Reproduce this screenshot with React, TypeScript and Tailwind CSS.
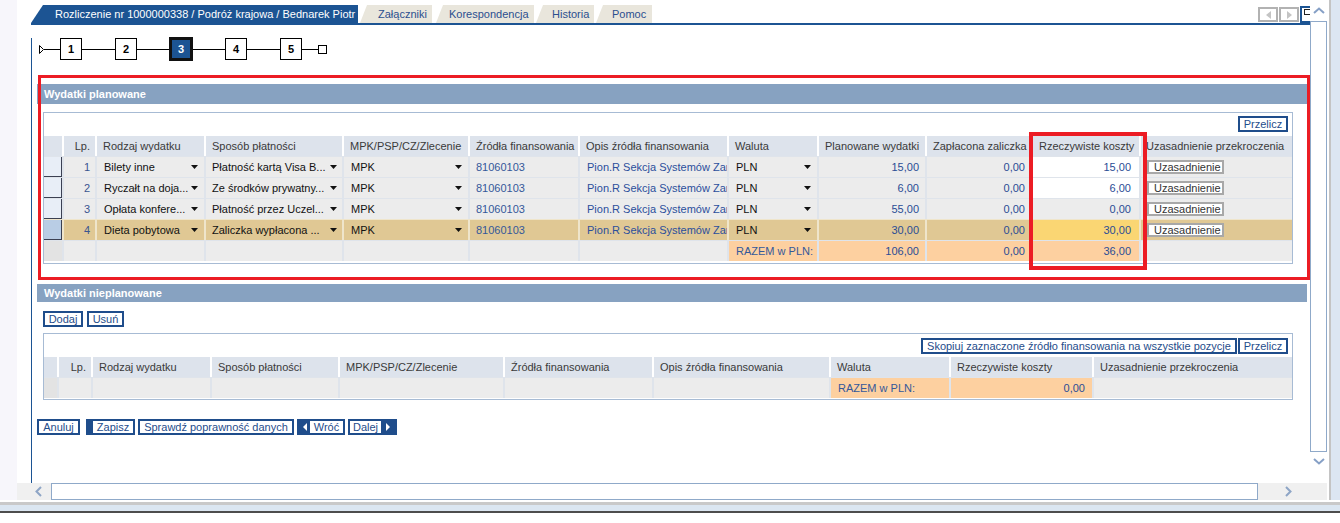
import React from "react";

const COLS1 =
  "grid grid-cols-[20px_33px_109px_138px_126px_110px_149px_90px_108px_106px_108px_151px]";
const COLS2 =
  "grid grid-cols-[15px_34px_119px_128px_165px_149px_177px_120px_143px_198px]";

function DownTri() {
  return (
    <svg width="7" height="4" viewBox="0 0 7 4" className="shrink-0">
      <path d="M0 0H7L3.5 4Z" fill="#111" />
    </svg>
  );
}

type Row = {
  lp: string;
  rodzaj: string;
  sposob: string;
  plan: string;
  zal: string;
  rz: string;
  hl?: boolean;
  rzBg: string;
};

const rows: Row[] = [
  { lp: "1", rodzaj: "Bilety inne", sposob: "Płatność kartą Visa B...", plan: "15,00", zal: "0,00", rz: "15,00", rzBg: "bg-white" },
  { lp: "2", rodzaj: "Ryczałt na doja...", sposob: "Ze środków prywatny...", plan: "6,00", zal: "0,00", rz: "6,00", rzBg: "bg-white" },
  { lp: "3", rodzaj: "Opłata konfere...", sposob: "Płatność przez Uczel...", plan: "55,00", zal: "0,00", rz: "0,00", rzBg: "bg-[#ececec]" },
  { lp: "4", rodzaj: "Dieta pobytowa", sposob: "Zaliczka wypłacona ...", plan: "30,00", zal: "0,00", rz: "30,00", hl: true, rzBg: "bg-[#fad673]" },
];

function Tab({ cls, children }: { cls: string; children: React.ReactNode }) {
  return (
    <div
      className={`h-[18px] bg-[#e9e6dc] text-[#2b4f8f] flex items-center whitespace-nowrap [clip-path:polygon(7px_0,100%_0,100%_100%,0_100%)] ${cls}`}
    >
      {children}
    </div>
  );
}

function Tabs() {
  return (
    <div className="flex items-end h-[23px] pl-[14px]">
      <div className="h-[18px] w-[327px] shrink-0 bg-[#1c5493] text-white flex items-center pl-[24px] whitespace-nowrap [clip-path:polygon(12px_0,100%_0,100%_100%,0_100%)]">
        Rozliczenie nr 1000000338 / Podróż krajowa / Bednarek Piotr
      </div>
      <Tab cls="ml-[2px] w-[72px] pl-[18px]">Załączniki</Tab>
      <Tab cls="ml-[4px] w-[98px] pl-[13px]">Korespondencja</Tab>
      <Tab cls="ml-[2px] w-[58px] pl-[16px]">Historia</Tab>
      <Tab cls="ml-[2px] w-[56px] pl-[16px]">Pomoc</Tab>
      <div className="ml-auto self-start mt-[7px] flex gap-[1px] -mr-[10px]">
        <div className="w-[20px] h-[15px] border-2 border-[#b2b2b2] bg-white flex items-center justify-center">
          <svg width="5" height="8" viewBox="0 0 5 8">
            <path d="M5 0V8L0 4Z" fill="#c4c4c4" />
          </svg>
        </div>
        <div className="w-[20px] h-[15px] border-2 border-[#b2b2b2] bg-white flex items-center justify-center">
          <svg width="5" height="8" viewBox="0 0 5 8">
            <path d="M0 0V8L5 4Z" fill="#c4c4c4" />
          </svg>
        </div>
        <div className="w-[20px] h-[17px] -mt-[1px] border-2 border-[#1c5493] bg-white pl-[2px] pt-[1px]">
          <div className="w-[8px] h-[6px] border-[1.5px] border-[#222]" />
        </div>
      </div>
    </div>
  );
}

function Stepper() {
  const Box = ({ n, active }: { n: string; active?: boolean }) =>
    active ? (
      <div className="w-[24px] h-[24px] border-[3px] border-[#111] bg-[#1c5493] text-white font-bold flex items-center justify-center">
        {n}
      </div>
    ) : (
      <div className="w-[22px] h-[22px] border border-black bg-white text-black font-bold flex items-center justify-center">
        {n}
      </div>
    );
  return (
    <div className="mt-[13px] ml-[7px] h-[22px] flex items-center">
      <svg width="5" height="9" viewBox="0 0 5 9">
        <path d="M0.5 0.5L4.5 4.5L0.5 8.5Z" fill="white" stroke="black" strokeWidth="1" />
      </svg>
      <div className="h-px w-[16px] bg-black" />
      <Box n="1" />
      <div className="h-px w-[33px] bg-black" />
      <Box n="2" />
      <div className="h-px w-[32px] bg-black" />
      <Box n="3" active />
      <div className="h-px w-[32px] bg-black" />
      <Box n="4" />
      <div className="h-px w-[33px] bg-black" />
      <Box n="5" />
      <div className="h-px w-[16px] bg-black" />
      <div className="w-[9px] h-[9px] border border-black bg-white" />
    </div>
  );
}

function BlueBtn({ cls, children }: { cls: string; children: React.ReactNode }) {
  return (
    <div
      className={`h-[16px] border-2 border-[#1f4d8b] bg-white text-[#1f4d8b] flex items-center justify-center whitespace-nowrap leading-none ${cls}`}
    >
      {children}
    </div>
  );
}

function Row1({ r }: { r: Row }) {
  const sep = r.hl ? "border-[#efe5cb]" : "border-[#dfe4eb]";
  const bg = r.hl ? "bg-[#e0c894]" : "bg-[#ececec]";
  const cell = `border-r-2 ${sep} flex items-center overflow-hidden whitespace-nowrap`;
  return (
    <div className={`${COLS1} h-[21px] border-t ${sep} ${bg}`}>
      <div className={`border-r-2 ${sep}`}>
        <div
          className={`h-full border-r border-b border-[#3b4052] ${r.hl ? "bg-[#b9cde5]" : "bg-[#e8eef7]"}`}
        />
      </div>
      <div className={`${cell} justify-end pr-[5px] text-[#3a5590]`}>{r.lp}</div>
      <div className={`${cell} justify-between pl-[7px] pr-[6px] text-[#111]`}>
        <span>{r.rodzaj}</span>
        <DownTri />
      </div>
      <div className={`${cell} justify-between pl-[6px] pr-[5px] text-[#111]`}>
        <span>{r.sposob}</span>
        <DownTri />
      </div>
      <div className={`${cell} justify-between pl-[7px] pr-[6px] text-[#111]`}>
        <span>MPK</span>
        <DownTri />
      </div>
      <div className={`${cell} pl-[6px] text-[#34589a]`}>81060103</div>
      <div className={`${cell} pl-[7px] text-[#2b4f9c]`}>
        <span className="block overflow-hidden whitespace-nowrap">Pion.R Sekcja Systemów Zar</span>
      </div>
      <div className={`${cell} justify-between pl-[7px] pr-[6px] text-[#111]`}>
        <span>PLN</span>
        <DownTri />
      </div>
      <div className={`${cell} justify-end pr-[6px] text-[#2a4d95]`}>{r.plan}</div>
      <div className={`${cell} justify-end pr-[6px] text-[#2a4d95]`}>{r.zal}</div>
      <div className={`${cell} justify-end pr-[8px] text-[#2a4d95] ${r.rzBg}`}>{r.rz}</div>
      <div className="flex items-start">
        <div className="ml-[6px] mt-[3px] h-[14px] w-[77px] border-2 border-[#a8a8a8] bg-white flex items-center pl-[5px] text-[#333] leading-none">
          Uzasadnienie
        </div>
      </div>
    </div>
  );
}

function Section1() {
  const heads = [
    "Rodzaj wydatku",
    "Sposób płatności",
    "MPK/PSP/CZ/Zlecenie",
    "Źródła finansowania",
    "Opis źródła finansowania",
    "Waluta",
    "Planowane wydatki",
    "Zapłacona zaliczka",
    "Rzeczywiste koszty",
  ];
  const tcell = "border-r-2 border-[#dfe4eb] flex items-center overflow-hidden whitespace-nowrap";
  return (
    <>
      <div className="mt-[24px] ml-[5px] w-[1270px] h-[20px] bg-[#87a2c1] text-white font-bold pl-[7px] flex items-center">
        Wydatki planowane
      </div>
      <div className="mt-[8px] ml-[11px] w-[1250px] border border-[#a7bbd4] pb-[2px]">
        <div className="h-[23px] flex justify-end items-start pt-[3px] pr-[4px]">
          <BlueBtn cls="w-[50px] h-[15px]">Przelicz</BlueBtn>
        </div>
        <div className={`${COLS1} h-[20px] bg-[#dde3ec] text-[#3a3a3a]`}>
          <div className="border-r-2 border-white" />
          <div className="border-r-2 border-white flex items-center justify-end pr-[5px]">Lp.</div>
          {heads.map((h) => (
            <div key={h} className="border-r-2 border-white flex items-center pl-[6px] whitespace-nowrap overflow-hidden">
              {h}
            </div>
          ))}
          <div className="flex items-center pl-[5px] whitespace-nowrap overflow-hidden">Uzasadnienie przekroczenia</div>
        </div>
        {rows.map((r) => (
          <Row1 key={r.lp} r={r} />
        ))}
        <div className={`${COLS1} h-[21px] border-t border-[#dfe4eb] bg-[#ececec]`}>
          <div className="border-r-2 border-[#dfe4eb] bg-[#e3e3e3]" />
          <div className={tcell} />
          <div className={tcell} />
          <div className={tcell} />
          <div className={tcell} />
          <div className={tcell} />
          <div className={tcell} />
          <div className={`${tcell} bg-[#fdd0a0] pl-[7px] text-[#34589a]`}>RAZEM w PLN:</div>
          <div className={`${tcell} bg-[#fdd0a0] justify-end pr-[6px] text-[#2a4d95]`}>106,00</div>
          <div className={`${tcell} bg-[#fdd0a0] justify-end pr-[6px] text-[#2a4d95]`}>0,00</div>
          <div className={`${tcell} bg-[#fdd0a0] justify-end pr-[8px] text-[#2a4d95]`}>36,00</div>
          <div />
        </div>
      </div>
    </>
  );
}

function Section2() {
  const heads = [
    "Rodzaj wydatku",
    "Sposób płatności",
    "MPK/PSP/CZ/Zlecenie",
    "Źródła finansowania",
    "Opis źródła finansowania",
    "Waluta",
    "Rzeczywiste koszty",
  ];
  const tcell = "border-r-2 border-[#dfe4eb] flex items-center overflow-hidden whitespace-nowrap";
  return (
    <>
      <div className="mt-[20px] ml-[5px] w-[1270px] h-[18px] bg-[#87a2c1] text-white font-bold pl-[7px] flex items-center">
        Wydatki nieplanowane
      </div>
      <div className="mt-[9px] ml-[11px] flex gap-[4px]">
        <BlueBtn cls="w-[40px]">Dodaj</BlueBtn>
        <BlueBtn cls="w-[37px]">Usuń</BlueBtn>
      </div>
      <div className="mt-[6px] ml-[11px] w-[1250px] border border-[#a7bbd4] pb-[1px]">
        <div className="h-[23px] flex justify-end items-start pt-[4px] pr-[4px] gap-[1px]">
          <BlueBtn cls="w-[316px] h-[15px]">Skopiuj zaznaczone źródło finansowania na wszystkie pozycje</BlueBtn>
          <BlueBtn cls="w-[50px] h-[15px]">Przelicz</BlueBtn>
        </div>
        <div className={`${COLS2} h-[20px] bg-[#dde3ec] text-[#3a3a3a]`}>
          <div className="border-r-2 border-white" />
          <div className="border-r-2 border-white flex items-center justify-end pr-[5px]">Lp.</div>
          {heads.map((h) => (
            <div key={h} className="border-r-2 border-white flex items-center pl-[6px] whitespace-nowrap overflow-hidden">
              {h}
            </div>
          ))}
          <div className="flex items-center pl-[6px] whitespace-nowrap overflow-hidden">Uzasadnienie przekroczenia</div>
        </div>
        <div className={`${COLS2} h-[21px] border-t border-[#dfe4eb] bg-[#ececec]`}>
          <div className="border-r-2 border-[#dfe4eb] bg-[#e3e3e3]" />
          <div className={tcell} />
          <div className={tcell} />
          <div className={tcell} />
          <div className={tcell} />
          <div className={tcell} />
          <div className={tcell} />
          <div className={`${tcell} bg-[#fdd0a0] pl-[7px] text-[#34589a]`}>RAZEM w PLN:</div>
          <div className={`${tcell} bg-[#fdd0a0] justify-end pr-[7px] text-[#2a4d95]`}>0,00</div>
          <div />
        </div>
      </div>
    </>
  );
}

function BottomButtons() {
  return (
    <div className="mt-[19px] ml-[5px] flex h-[16px]">
      <BlueBtn cls="w-[43px]">Anuluj</BlueBtn>
      <div className="ml-[6px] w-[49px] h-[16px] flex border-2 border-[#1f4d8b] bg-white text-[#1f4d8b] leading-none">
        <div className="w-[5px] bg-[#1f4d8b]" />
        <div className="flex-1 flex items-center justify-center">Zapisz</div>
      </div>
      <BlueBtn cls="ml-[3px] w-[156px]">Sprawdź poprawność danych</BlueBtn>
      <div className="ml-[3px] w-[48px] h-[16px] flex border-2 border-[#1f4d8b] bg-white text-[#1f4d8b] leading-none">
        <div className="w-[11px] bg-[#1f4d8b] flex items-center justify-center">
          <svg width="4" height="8" viewBox="0 0 4 8">
            <path d="M4 0V8L0 4Z" fill="white" />
          </svg>
        </div>
        <div className="flex-1 flex items-center justify-center">Wróć</div>
      </div>
      <div className="ml-[3px] w-[49px] h-[16px] flex border-2 border-[#1f4d8b] bg-white text-[#1f4d8b] leading-none">
        <div className="flex-1 flex items-center justify-center">Dalej</div>
        <div className="w-[14px] bg-[#1f4d8b] flex items-center justify-center">
          <svg width="4" height="8" viewBox="0 0 4 8">
            <path d="M0 0V8L4 4Z" fill="white" />
          </svg>
        </div>
      </div>
    </div>
  );
}

function Main() {
  return (
    <div className="relative h-[483px] overflow-hidden bg-white">
      <Tabs />
      <div className="ml-[14px] h-[2px] bg-[#1c5493]" />
      <div className="ml-[14px] h-[458px] border-l border-[#1c5493]">
        <Stepper />
        <Section1 />
        <Section2 />
        <BottomButtons />
      </div>
      <div className="absolute left-[21px] top-[75px] w-[1272px] h-[205px] border-[3px] border-[#ec1c24]" />
      <div className="absolute left-[1012px] top-[132px] w-[118px] h-[138px] border-4 border-[#ec1c24]" />
    </div>
  );
}

function VScroll() {
  return (
    <div className="h-[483px] bg-white flex flex-col">
      <div className="h-[21px] flex items-center justify-center">
        <svg width="12" height="7" viewBox="0 0 12 7">
          <path d="M1 6L6 1.5L11 6" stroke="#86a0c6" strokeWidth="2" fill="none" />
        </svg>
      </div>
      <div className="h-[431px] border border-[#8fa9c9] bg-white" />
      <div className="h-[18px] flex items-center justify-center">
        <svg width="12" height="7" viewBox="0 0 12 7">
          <path d="M1 1L6 5.5L11 1" stroke="#86a0c6" strokeWidth="2" fill="none" />
        </svg>
      </div>
    </div>
  );
}

function HScroll() {
  return (
    <div className="h-[17px] bg-[#f0f0f0] flex items-center">
      <div className="w-[34px] h-full flex items-center pl-[18px]">
        <svg width="7" height="11" viewBox="0 0 7 11">
          <path d="M6 1L1.5 5.5L6 10" stroke="#8ea5c6" strokeWidth="2" fill="none" />
        </svg>
      </div>
      <div className="h-[17px] w-[1207px] border border-[#8fa9c9] bg-white" />
      <div className="flex-1 h-full flex items-center pl-[27px]">
        <svg width="7" height="11" viewBox="0 0 7 11">
          <path d="M1 1L5.5 5.5L1 10" stroke="#8ea5c6" strokeWidth="2" fill="none" />
        </svg>
      </div>
    </div>
  );
}

export default function App() {
  return (
    <div className="w-[1340px] h-[523px] overflow-hidden bg-white font-['Liberation_Sans',Arial,sans-serif] text-[11px] leading-[13px] flex flex-col">
      <div className="flex h-[500px] shrink-0">
        <div className="w-[17px] h-[500px] bg-[#f7f6fb]" />
        <div className="w-[1293px] flex flex-col">
          <Main />
          <HScroll />
        </div>
        <div className="w-[17px] flex flex-col">
          <VScroll />
          <div className="h-[17px] bg-[#f0f0f0]" />
        </div>
        <div className="w-[13px] flex">
          <div className="w-[2px] bg-white" />
          <div className="w-[2px] bg-[#c4c4c4]" />
          <div className="flex-1 bg-[#dce6f2]" />
        </div>
      </div>
      <div className="h-[2px] shrink-0 bg-white" />
      <div className="h-[3px] shrink-0 bg-[#c9c9c9]" />
      <div className="h-[6px] shrink-0 bg-[#dbe6f1]" />
      <div className="h-[2px] shrink-0 bg-[#4d4d4d]" />
      <div className="flex-1 bg-white" />
    </div>
  );
}
